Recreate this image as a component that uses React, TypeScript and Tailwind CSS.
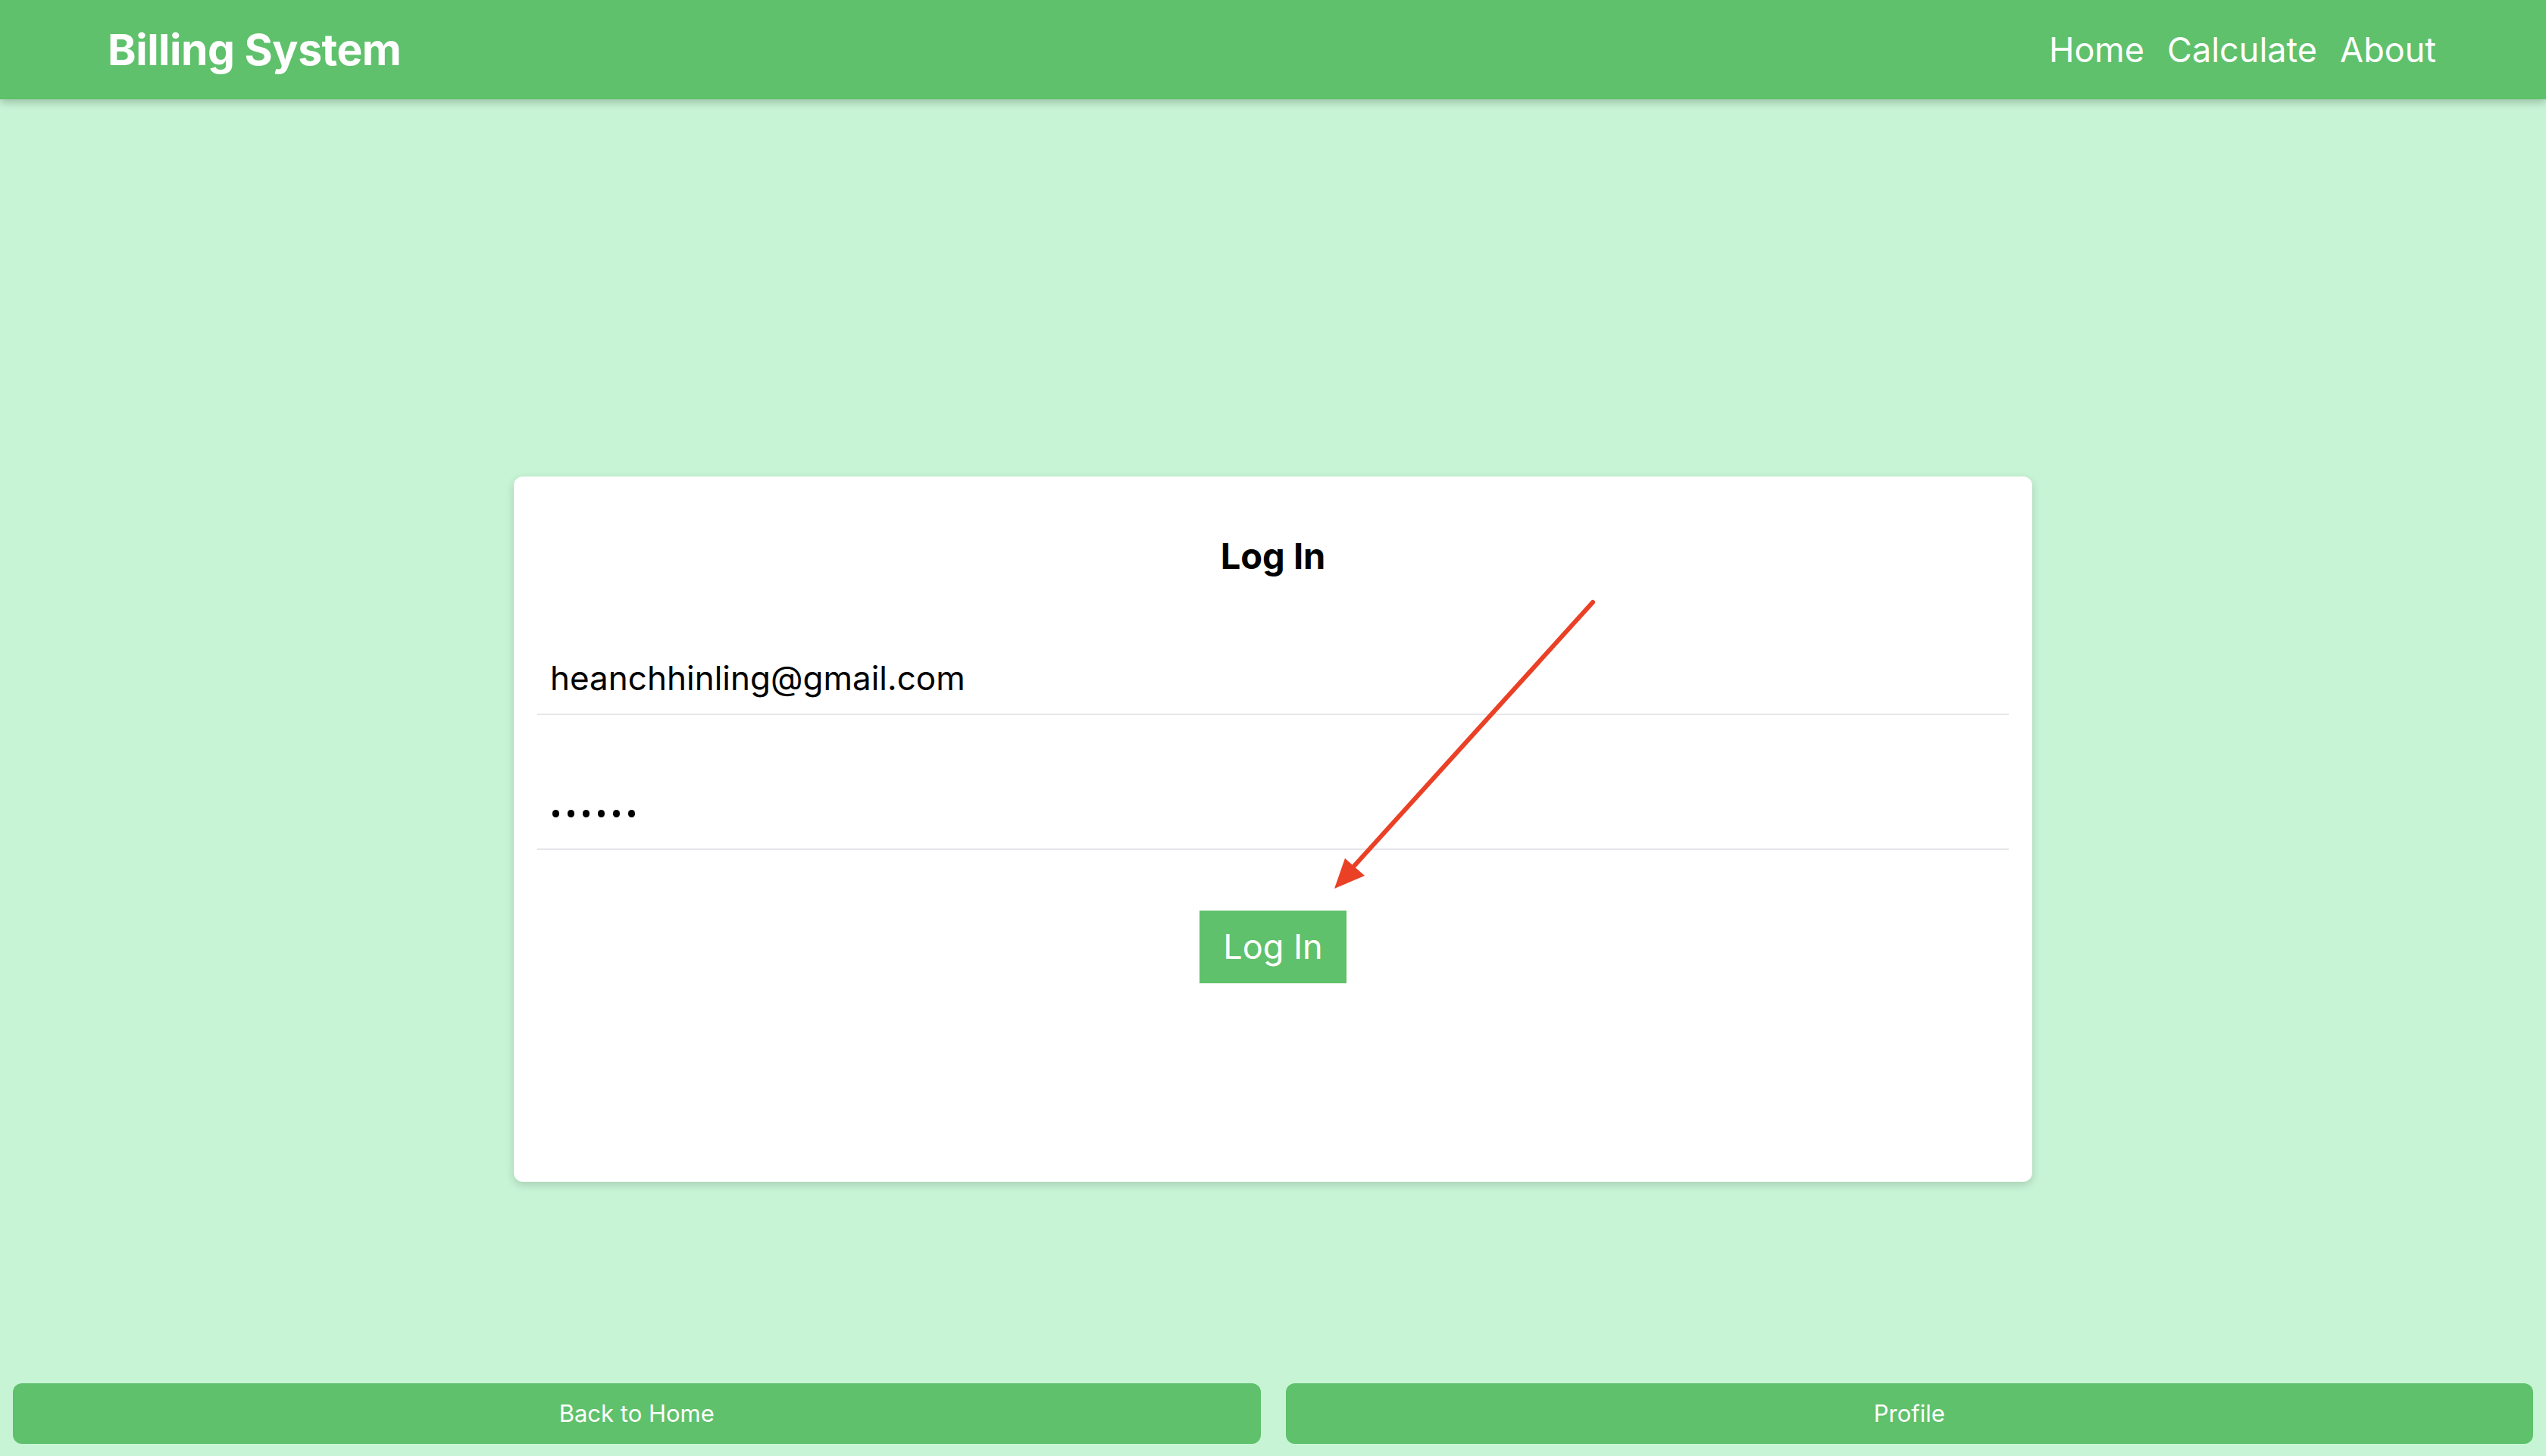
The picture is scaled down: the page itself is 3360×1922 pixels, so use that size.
import React from "react";

export default function App() {
  return (
    <div className="min-h-screen w-full flex flex-col bg-[#c7f4d5] font-['Inter','Noto_Sans',sans-serif] text-black">
      <header className="relative z-10 h-[131px] shrink-0 bg-[#5fc16b] shadow-[0_4px_10px_rgba(0,0,0,0.22)] flex items-center justify-between pl-[142px] pr-[145px]">
        <div className="text-white font-bold text-[57px] leading-none tracking-[-0.5px]">Billing System</div>
        <nav className="flex items-center gap-[30px] text-white text-[45px] leading-none">
          <a className="cursor-pointer">Home</a>
          <a className="cursor-pointer">Calculate</a>
          <a className="cursor-pointer">About</a>
        </nav>
      </header>

      <main className="flex-1 flex flex-col items-center">
        <div className="relative mt-[498px] w-[2004px] h-[931px] bg-white rounded-[12px] shadow-[0_4px_12px_rgba(0,0,0,0.16)] px-[31px] flex flex-col">
          <h2 className="mt-[76px] text-center font-bold text-[47px] leading-[58px]">Log In</h2>

          <div className="mt-[86px] border-b-2 border-[#e6e6ea] pl-[17px] pt-[20px] pb-[20px] text-[44px] leading-[53px]">
            heanchhinling@gmail.com
          </div>

          <div className="mt-[83px] border-b-2 border-[#e6e6ea] pl-[20px] pt-[20px] pb-[20px] h-[95px] flex items-center gap-[11px]">
            {[0, 1, 2, 3, 4, 5].map((i) => (
              <span key={i} className="block w-[9px] h-[10px] rounded-full bg-black" />
            ))}
          </div>

          <div className="mt-[80px] flex justify-center">
            <button className="bg-[#5fc16b] text-white text-[45px] leading-[58px] px-[31px] py-[19px]">Log In</button>
          </div>

          <svg
            className="absolute left-0 top-0 pointer-events-none"
            width="2004"
            height="931"
            viewBox="0 0 2004 931"
          >
            <line x1={1424} y1={166} x2={1101} y2={523} stroke="#ea4126" strokeWidth={6} strokeLinecap="round" />
            <polygon points="1083,544 1123,527 1097,504" fill="#ea4126" />
          </svg>
        </div>
      </main>

      <footer className="shrink-0 flex gap-[33px] px-[17px] pt-[16px] pb-[16px]">
        <button className="flex-1 h-[80px] rounded-[12px] bg-[#5fc16b] text-white text-[31px]">Back to Home</button>
        <button className="flex-1 h-[80px] rounded-[12px] bg-[#5fc16b] text-white text-[31px]">Profile</button>
      </footer>
    </div>
  );
}
